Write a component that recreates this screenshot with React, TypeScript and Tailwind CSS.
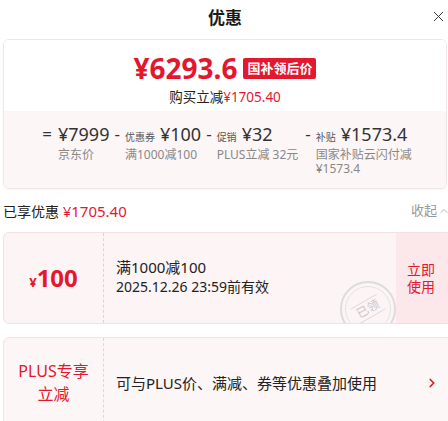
import { ChevronRight, ChevronUp, X } from "lucide-react";

const RED = "text-[#e3172d]";

interface Part {
  sep: string;
  tag?: string;
  value: string;
  note: string[];
}

const parts: Part[] = [
  { sep: "=", value: "¥7999", note: ["京东价"] },
  { sep: "-", tag: "优惠券", value: "¥100", note: ["满1000减100"] },
  { sep: "-", tag: "促销", value: "¥32", note: ["PLUS立减 32元"] },
  { sep: "-", tag: "补贴", value: "¥1573.4", note: ["国家补贴云闪付减", "¥1573.4"] },
];

function Stamp() {
  return (
    <div className="absolute left-[336px] top-[48px] w-[56px] h-[56px] rounded-full border-[2px] border-[#dcdcdc] flex items-center justify-center">
      <div className="w-[46px] h-[46px] rounded-full border border-[#e2e2e2] flex items-center justify-center">
        <span className="-rotate-[30deg] border-y border-[#dadada] px-[3px] text-[12px] leading-[16px] text-[#c8c8c8]">
          已领
        </span>
      </div>
    </div>
  );
}

export default function App() {
  return (
    <div
      className="w-[448px] h-[421px] overflow-hidden bg-white text-[#222]"
      style={{ fontFamily: '"Noto Sans", "Noto Sans CJK SC", sans-serif' }}
    >
      {/* Header */}
      <div className="grid grid-cols-[1fr_auto_1fr] items-center h-[33px] pl-[3px] pr-[1px]">
        <div />
        <div className="text-[17px] font-bold text-[#1a1a1a] leading-none pt-[1px]">优惠</div>
        <div className="flex justify-end">
          <X size={17} strokeWidth={1.4} className="text-[#333]" />
        </div>
      </div>

      <div className="pl-[3px] pr-[1px] mt-[6px]">
        {/* Price breakdown card */}
        <div className="rounded-[6px] border border-[#f1e6e7] overflow-hidden shadow-[0_1px_2px_rgba(0,0,0,0.04)]">
          <div className="h-[71px] bg-white flex flex-col items-center pt-[15px]">
            <div className="flex items-center gap-[6px]">
              <span className={`text-[28px] font-bold leading-[26px] ${RED}`}>¥6293.6</span>
              <span className="h-[21px] px-[4px] rounded-[2px] bg-[#e3172d] text-white text-[13px] font-bold leading-[21px]">
                国补领后价
              </span>
            </div>
            <div className="mt-[8px] text-[13.5px] leading-[16px]">
              购买立减<span className={RED}>¥1705.40</span>
            </div>
          </div>
          <div className="h-[77px] bg-[#fdf6f6] flex justify-center pt-[11px] pl-[4px]">
            {parts.map((p, i) => (
              <div key={i} className="flex items-start">
                <span className={`text-[17px] leading-[24px] text-[#333] ${i === 0 ? "mr-[6px]" : i === 3 ? "ml-[7px] mr-[5px]" : "mx-[5px]"}`}>{p.sep}</span>
                <div className={`flex flex-col ${i === 3 ? "w-[96px]" : ""}`}>
                  <div className="flex items-baseline gap-[5px] h-[24px]">
                    {p.tag && <span className="text-[10px] text-[#555]">{p.tag}</span>}
                    <span className="text-[18px] leading-[24px] text-[#333]">{p.value}</span>
                  </div>
                  <div className="mt-[2px] text-[12px] leading-[14px] text-[#888] whitespace-nowrap">
                    {p.note.map((n) => (
                      <div key={n}>{n}</div>
                    ))}
                  </div>
                </div>
              </div>
            ))}
          </div>
        </div>

        {/* Summary row */}
        <div className="flex items-center justify-between h-[42px] mt-[1px]">
          <div className="text-[14px] leading-none">
            已享优惠 <span className={`text-[15px] ${RED}`}>¥1705.40</span>
          </div>
          <div className="flex items-center gap-[1px] text-[13px] text-[#999] mr-[-3px]">
            收起
            <ChevronUp size={12} strokeWidth={1.5} />
          </div>
        </div>
      </div>

      {/* Coupons */}
      <div className="pl-[3px] mr-[-4px] flex flex-col gap-[13px]">
        <div className="relative h-[92px] rounded-[6px] border border-[#f3e0e3] bg-[#fdf4f5] flex overflow-hidden">
          <div className="w-[100px] border-r border-dashed border-[#e6cfd3] flex items-center justify-center">
            <span className={`font-bold ${RED}`}>
              <span className="text-[13px]">¥</span>
              <span className="text-[24px]">100</span>
            </span>
          </div>
          <div className="flex-1 pl-[12px] flex flex-col justify-center pb-[2px]">
            <div className="text-[15px] leading-[19px]">满1000减100</div>
            <div className="text-[14px] leading-[19px]">2025.12.26 23:59前有效</div>
          </div>
          <Stamp />
          <div className={`w-[55px] bg-[#fce7eb] flex flex-col items-start justify-center pl-[11px] text-[14px] leading-[17px] ${RED}`}>
            <span>立即</span>
            <span>使用</span>
          </div>
        </div>

        <div className="h-[92px] rounded-[6px] border border-[#f3e2e4] bg-[#fdf6f6] flex">
          <div className={`w-[100px] border-r border-dashed border-[#e6d3d6] flex flex-col items-center justify-center text-[16px] leading-[23px] ${RED}`}>
            <span>PLUS专享</span>
            <span>立减</span>
          </div>
          <div className="flex-1 pl-[12px] flex items-center text-[15px]">
            可与PLUS价、满减、券等优惠叠加使用
          </div>
          <div className="w-[14px] mr-[12px] flex items-center">
            <ChevronRight size={14} strokeWidth={3} className="text-[#e3172d]" />
          </div>
        </div>
      </div>
    </div>
  );
}
